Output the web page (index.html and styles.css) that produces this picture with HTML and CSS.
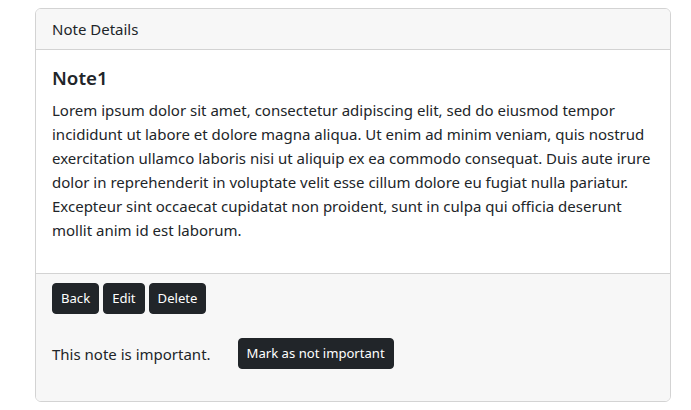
FILE: index.html
```html
<!DOCTYPE html>
<html lang="en">
<head>
<meta charset="utf-8">
<title>Note Details</title>
<link rel="stylesheet" href="styles.css">
</head>
<body>
<div class="page">
  <div class="card">
    <div class="card-header">Note Details</div>
    <div class="card-body">
      <h5 class="card-title">Note1</h5>
      <p class="card-text">Lorem ipsum dolor sit amet, consectetur adipiscing elit, sed do eiusmod tempor incididunt ut labore et dolore magna aliqua. Ut enim ad minim veniam, quis nostrud exercitation ullamco laboris nisi ut aliquip ex ea commodo consequat. Duis aute irure dolor in reprehenderit in voluptate velit esse cillum dolore eu fugiat nulla pariatur. Excepteur sint occaecat cupidatat non proident, sunt in culpa qui officia deserunt mollit anim id est laborum.</p>
    </div>
    <div class="card-footer">
      <div class="actions">
        <button class="btn">Back</button>
        <button class="btn">Edit</button>
        <button class="btn">Delete</button>
      </div>
      <div class="important">
        <span class="important-text">This note is important.</span>
        <button class="btn btn-toggle">Mark as not important</button>
      </div>
    </div>
  </div>
</div>
</body>
</html>
```

FILE: styles.css
```css
* { box-sizing: border-box; }
html, body {
  margin: 0;
  background: #fff;
}
body {
  padding: 8px 21px 0 35px;
  font-family: "Noto Sans", "Open Sans", sans-serif;
  font-size: 15px;
  line-height: 24px;
  color: #212529;
}
.page {
  width: 636px;
}
.card {
  border: 1px solid #d3d3d3;
  border-radius: 6px;
  overflow: hidden;
  background: #fff;
}
.card-header {
  background: #f7f7f7;
  padding: 8px 16px;
  border-bottom: 1px solid #d3d3d3;
}
.card-body {
  padding: 16px 16px 15px;
}
.card-title {
  margin: 0 0 8px;
  font-size: 18.75px;
  line-height: 24px;
  font-weight: 600;
}
.card-text {
  margin: 0 0 16px;
}
.card-footer {
  background: #f7f7f7;
  border-top: 1px solid #d3d3d3;
  padding: 9px 16px 32px;
}
.actions {
  display: flex;
  gap: 4px;
}
.btn {
  font-family: inherit;
  font-size: 13.1px;
  line-height: 21px;
  color: #fff;
  background: #212529;
  border: 1px solid #212529;
  border-radius: 4px;
  padding: 4px 8px;
  cursor: pointer;
}
.important {
  margin-top: 24px;
  display: flex;
  align-items: center;
  gap: 27px;
}
```
